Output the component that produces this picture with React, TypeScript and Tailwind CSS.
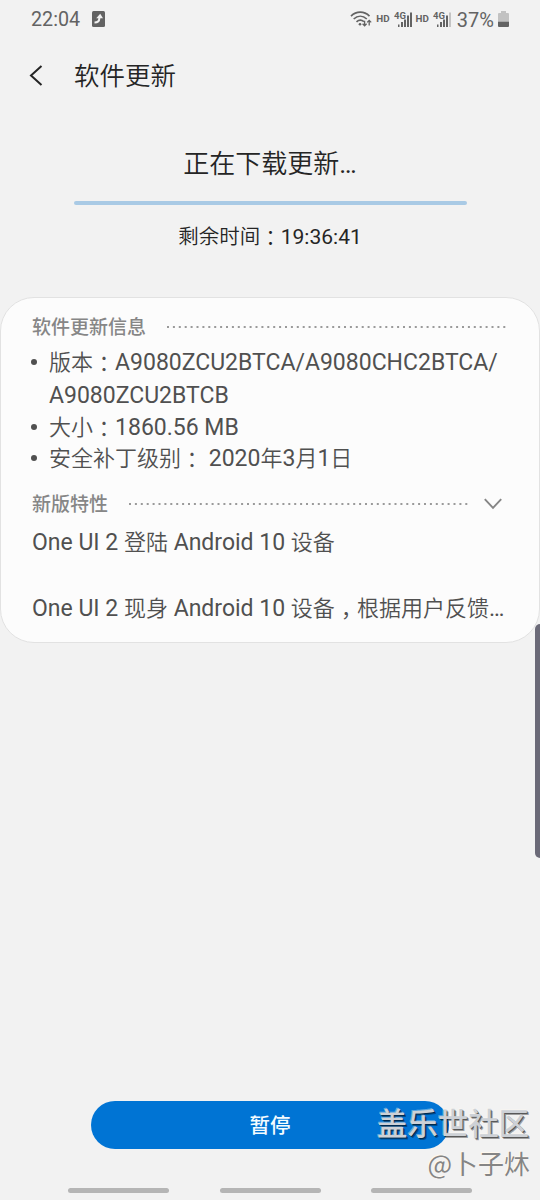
import type { ReactNode } from 'react'

const sans = "font-['Roboto','Noto_Sans_CJK_SC',sans-serif]"

// The TC face centres full-width punctuation, it only has to drop to the baseline.
function Colon() {
  return <span className="inline-block h-5 translate-y-[2px] leading-5 font-['Noto_Sans_CJK_TC',sans-serif]">：</span>
}

function Comma() {
  return <span className="inline-block h-5 translate-y-[7px] leading-5 font-['Noto_Sans_CJK_TC',sans-serif]">，</span>
}

// Roboto runs a touch larger than the Chinese text around it.
function Latin({ children }: { children: ReactNode }) {
  return <span className="text-[23px] font-normal">{children}</span>
}

function Signal({ weak }: { weak?: boolean }) {
  return (
    <svg width="19" height="17" viewBox="0 0 19 17" fill="#636363">
      <text x="0" y="7.6" fontSize="9.5" fontWeight="700" fontFamily="Roboto" textLength="12">4G</text>
      <rect x="4" y="13.5" width="1.5" height="2.5" />
      <rect x="7" y="11" width="2" height="5" />
      <rect x="10" y="8.5" width="2" height="7.5" />
      <rect x="13" y="4.5" width="2" height="11.5" />
      <rect x="16" y="1.5" width="2" height="14.5" fill={weak ? '#c4c4c4' : '#636363'} />
    </svg>
  )
}

function StatusBar() {
  return (
    <div className="flex h-10 items-center pl-[31px] pr-[31px] text-[#636363]">
      <span className="text-[19.7px] leading-10">22:04</span>
      <svg className="-mt-[2px] ml-[12px]" width="13" height="16" viewBox="0 0 13 16">
        <rect width="13" height="16" rx="1.5" fill="#636363" />
        <path d="M2.5 11.6c3 0 4.8-1.2 4.8-4V6.2" fill="none" stroke="#f2f2f2" strokeWidth="2" />
        <path d="M4.2 7.2 8.2 2.8l2.8 4.4z" fill="#f2f2f2" />
      </svg>
      <div className="ml-auto flex items-center">
        <svg className="-mt-[2px]" width="22" height="18" viewBox="0 0 22 18" fill="none" stroke="#636363">
          <path d="M1 6.1C6.4.9 14.1.9 19.5 6.1M3.7 9C7.7 5.3 12.8 5.3 16.8 9M6.5 11.8c2.3-2 5.2-2 7.4-.2" strokeWidth="1.7" />
          <circle cx="10" cy="14.2" r="1.3" fill="#636363" stroke="none" />
          <path d="M14.6 10.7v5m-2-1.9 2 2 2-2M19.2 15.5v-5m-2 1.9 2-2 2 2" strokeWidth="1.3" />
        </svg>
        <span className="-mt-[2px] ml-[4px] text-[9.8px] font-bold">HD</span>
        <span className="-mt-px ml-[4px]"><Signal /></span>
        <span className="-mt-[2px] ml-[3px] text-[9.8px] font-bold">HD</span>
        <span className="-mt-px ml-[4px]"><Signal weak /></span>
        <span className="ml-[5px] text-[20px] leading-10">37%</span>
        <svg className="-mt-[2px] ml-[4px]" width="11" height="16" viewBox="0 0 11 16">
          <path d="M3 0h5v2h2a1 1 0 0 1 1 1v7H0V3a1 1 0 0 1 1-1h2z" fill="#c2c2c2" />
          <path d="M0 10.5h11V15a1 1 0 0 1-1 1H1a1 1 0 0 1-1-1z" fill="#636363" />
        </svg>
      </div>
    </div>
  )
}

function SectionTitle({ title, children }: { title: string; children?: ReactNode }) {
  return (
    <div className="flex h-8 items-center text-[19px] font-medium text-[#868686]">
      <h2 className="shrink-0 pt-[3px]">{title}</h2>
      <svg className="ml-[20px] h-[2px] flex-1">
        <line x1="1" y1="1" x2="100%" y2="1" stroke="#9a9a9a" strokeWidth="2" strokeDasharray="2 3.9" />
      </svg>
      {children}
    </div>
  )
}

function Bullet({ children }: { children: ReactNode }) {
  return (
    <li className="flex">
      <span className="mt-[12px] mr-[12px] size-[6px] shrink-0 rounded-full bg-[#505050]" />
      <div>{children}</div>
    </li>
  )
}

export default function App() {
  return (
    <main className={`relative flex h-[1200px] w-[540px] flex-col overflow-hidden bg-[#f2f2f2] text-[#252525] ${sans}`}>
      <StatusBar />

      <header className="flex h-[72px] items-center pl-[29px]">
        <svg width="14" height="22" viewBox="0 0 14 22" fill="none" stroke="#252525" strokeWidth="2">
          <path d="M12.5 1 2 10.5l10.5 9.5" />
        </svg>
        <h1 className="ml-[31px] text-[25.5px] leading-9 font-[350]">软件更新</h1>
      </header>

      <section className="flex flex-col items-center">
        <p className="mt-[33px] text-[26px] leading-[38px] font-[350]">
          正在下载更新<span className="font-normal">…</span>
        </p>
        <div className="mt-[18px] h-1 w-[393px] rounded-full bg-[#a9cae5]" />
        <p className="mt-[16px] h-8 text-[20.5px] leading-8 font-[350]">
          剩余时间<Colon /><span className="text-[21px] font-normal">19:36:41</span>
        </p>
      </section>

      <section className="mt-[44px] h-[346px] rounded-[34px] border border-[#e2e2e2] bg-[#fcfcfc] pl-[31px] pr-[31px] pt-[13px] text-[22px] font-[350] text-[#505050]">
        <SectionTitle title="软件更新信息" />
        <ul className="-ml-px pt-1 leading-8">
          <Bullet>
            <p className="h-[33px]">版本<Colon /><Latin>A9080ZCU2BTCA/A9080CHC2BTCA/</Latin></p>
            <p className="h-8"><Latin>A9080ZCU2BTCB</Latin></p>
          </Bullet>
          <Bullet>
            <p className="h-[31px]">大小<Colon /><Latin>1860.56 MB</Latin></p>
          </Bullet>
          <Bullet>
            <p className="h-8">
              安全补丁级别<Colon /><Latin> 2020</Latin>年<Latin>3</Latin>月<Latin>1</Latin>日
            </p>
          </Bullet>
        </ul>
        <div className="mt-[13px]">
          <SectionTitle title="新版特性">
            <svg className="ml-[15px] mr-[6px]" width="18" height="12" viewBox="0 0 18 12" fill="none" stroke="#868686" strokeWidth="1.9">
              <path d="m.8 1.2 8.2 8.7 8.2-8.7" />
            </svg>
          </SectionTitle>
        </div>
        <p className="mt-[6px] h-[33px] leading-[33px]">
          <Latin>One UI 2 </Latin>登陆<Latin> Android 10 </Latin>设备
        </p>
        <p className="mt-[33px] h-[33px] whitespace-nowrap leading-[33px]">
          <Latin>One UI 2 </Latin>现身<Latin> Android 10 </Latin>设备<Comma />根据用户反馈<Latin>…</Latin>
        </p>
      </section>

      <footer className="mt-auto">
        <button className="mx-auto block h-12 w-[358px] rounded-full bg-[#0074d4] pt-[3px] text-[20.5px] font-medium text-[#f5fcff]">
          暂停
        </button>
        <nav className="mt-[39px] mb-[7px] flex justify-between px-[68px]">
          <span className="h-[5px] w-[101px] rounded-full bg-[#b5b5b5]" />
          <span className="h-[5px] w-[101px] rounded-full bg-[#b5b5b5]" />
          <span className="h-[5px] w-[101px] rounded-full bg-[#b5b5b5]" />
        </nav>
      </footer>

      {/* edge panel handle */}
      <div className="absolute right-0 top-[624px] h-[234px] w-[5px] rounded-l-[5px] bg-[#6b6a78]" />

      {/* community watermark */}
      <div className="absolute right-[11px] top-[1099px] text-right font-['Noto_Sans_CJK_SC',sans-serif]">
        <p className="text-[30.4px] font-medium leading-[46px] text-[#cdd1d6] [text-shadow:1px_1px_0_rgba(0,0,0,0.45),2px_2px_0_rgba(0,0,0,0.35),-1px_-1px_0_rgba(255,250,240,0.4)]">盖乐世社区</p>
        <p className="-mr-px pt-px text-[26px] leading-[34px] text-[#858585] [text-shadow:-1px_-1px_0_#fff8ee]">@卜子炑</p>
      </div>
    </main>
  )
}
